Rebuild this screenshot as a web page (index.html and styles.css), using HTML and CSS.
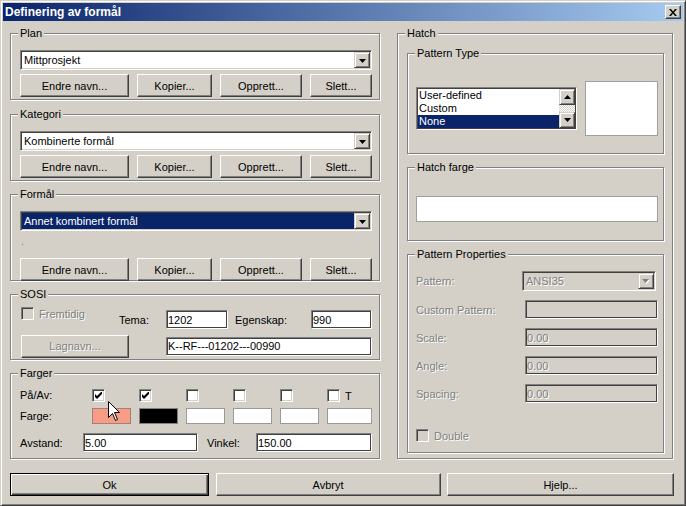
FILE: index.html
```html
<!DOCTYPE html>
<html lang="no">
<head>
<meta charset="utf-8">
<title>Definering av formål</title>
<link rel="stylesheet" href="styles.css">
</head>
<body>
<div class="window">
  <div class="titlebar">
    <span class="title">Definering av formål</span>
    <span class="close"><svg width="8" height="7" viewBox="0 0 8 7"><path d="M0 0H2L4 2.5L6 0H8L5 3.5L8 7H6L4 4.5L2 7H0L3 3.5Z"/></svg></span>
  </div>
  <div class="main">
    <div class="columns">
      <div class="left">
        <div class="group g-std g-plan">
          <span class="legend">Plan</span>
          <div class="combo"><span class="ctext">Mittprosjekt</span><span class="drop"><svg width="7" height="4" viewBox="0 0 7 4"><path d="M0 0H7L3.5 4Z"/></svg></span></div>
          <div class="btnrow">
            <button class="btn b-endre" type="button">Endre navn...</button>
            <button class="btn b-kopier" type="button">Kopier...</button>
            <button class="btn b-opprett" type="button">Opprett...</button>
            <button class="btn b-slett" type="button">Slett...</button>
          </div>
        </div>
        <div class="group g-std g-kat">
          <span class="legend">Kategori</span>
          <div class="combo"><span class="ctext">Kombinerte formål</span><span class="drop"><svg width="7" height="4" viewBox="0 0 7 4"><path d="M0 0H7L3.5 4Z"/></svg></span></div>
          <div class="btnrow">
            <button class="btn b-endre" type="button">Endre navn...</button>
            <button class="btn b-kopier" type="button">Kopier...</button>
            <button class="btn b-opprett" type="button">Opprett...</button>
            <button class="btn b-slett" type="button">Slett...</button>
          </div>
        </div>
        <div class="group g-formal">
          <span class="legend">Formål</span>
          <div class="combo"><span class="ctext sel">Annet kombinert formål</span><span class="drop"><svg width="7" height="4" viewBox="0 0 7 4"><path d="M0 0H7L3.5 4Z"/></svg></span></div>
          <div class="spacer">.</div>
          <div class="btnrow">
            <button class="btn b-endre" type="button">Endre navn...</button>
            <button class="btn b-kopier" type="button">Kopier...</button>
            <button class="btn b-opprett" type="button">Opprett...</button>
            <button class="btn b-slett" type="button">Slett...</button>
          </div>
        </div>
        <div class="group g-sosi">
          <span class="legend">SOSI</span>
          <div class="srow1">
            <div class="fremtidig"><span class="chk dchk"></span><span class="dis">Fremtidig</span></div>
            <span class="l-tema">Tema:</span>
            <span class="edit e-tema">1202</span>
            <span class="l-egenskap">Egenskap:</span>
            <span class="edit e-egenskap">990</span>
          </div>
          <div class="srow2">
            <button class="btn b-lagnavn" type="button"><span class="dis">Lagnavn...</span></button>
            <span class="edit e-lag">K--RF---01202---00990</span>
          </div>
        </div>
        <div class="group g-farger">
          <span class="legend">Farger</span>
          <div class="fgrid">
            <span class="flbl">På/Av:</span>
            <span class="chk"><svg width="7" height="7" viewBox="0 0 7 7"><path d="M0 2L2 4L6 0H7V2L2 7L0 5Z"/></svg></span>
            <span class="chk"><svg width="7" height="7" viewBox="0 0 7 7"><path d="M0 2L2 4L6 0H7V2L2 7L0 5Z"/></svg></span>
            <span class="chk"></span>
            <span class="chk"></span>
            <span class="chk"></span>
            <span class="tcell"><span class="chk"></span><span>T</span></span>
            <span class="flbl">Farge:</span>
            <span class="sw salmon"></span>
            <span class="sw black"></span>
            <span class="sw"></span>
            <span class="sw"></span>
            <span class="sw"></span>
            <span class="sw wide"></span>
          </div>
          <div class="frow3">
            <span class="l-avstand">Avstand:</span>
            <span class="edit e-avstand">5.00</span>
            <span class="l-vinkel">Vinkel:</span>
            <span class="edit e-vinkel">150.00</span>
          </div>
        </div>
      </div>
      <div class="group hatch">
        <span class="legend">Hatch</span>
        <div class="group g-ptype">
          <span class="legend">Pattern Type</span>
          <div class="list">
            <div class="items">
              <div class="item">User-defined</div>
              <div class="item">Custom</div>
              <div class="item sel">None</div>
            </div>
            <div class="vscroll">
              <span class="sbtn"><svg width="7" height="4" viewBox="0 0 7 4"><path d="M3.5 0L7 4H0Z"/></svg></span>
              <span class="track"></span>
              <span class="sbtn"><svg width="7" height="4" viewBox="0 0 7 4"><path d="M0 0H7L3.5 4Z"/></svg></span>
            </div>
          </div>
          <div class="preview"></div>
        </div>
        <div class="group g-hfarge">
          <span class="legend">Hatch farge</span>
          <div class="hbox"></div>
        </div>
        <div class="group g-pprop">
          <span class="legend">Pattern Properties</span>
          <div class="prow prow-first">
            <span class="dis">Pattern:</span>
            <div class="combo dcombo"><span class="ctext dis">ANSI35</span><span class="drop"><svg width="8" height="5" viewBox="0 0 8 5"><path d="M1 1H8L4.5 5Z" fill="#fff"/><path d="M0 0H7L3.5 4Z" fill="#808080"/></svg></span></div>
          </div>
          <div class="prow">
            <span class="dis">Custom Pattern:</span>
            <span class="edit dedit"></span>
          </div>
          <div class="prow">
            <span class="dis">Scale:</span>
            <span class="edit dedit"><span class="dis">0.00</span></span>
          </div>
          <div class="prow">
            <span class="dis">Angle:</span>
            <span class="edit dedit"><span class="dis">0.00</span></span>
          </div>
          <div class="prow">
            <span class="dis">Spacing:</span>
            <span class="edit dedit"><span class="dis">0.00</span></span>
          </div>
          <div class="double"><span class="chk dchk"></span><span class="dis">Double</span></div>
        </div>
      </div>
    </div>
    <div class="actions">
      <button class="btn btn-default b-ok" type="button">Ok</button>
      <button class="btn b-avbryt" type="button">Avbryt</button>
      <button class="btn b-hjelp" type="button">Hjelp...</button>
    </div>
  </div>
  <svg class="cursor" width="12" height="20" viewBox="0 0 12 20"><path d="M0.5 0.5V16.5L4.5 12.5L7.5 19.5L9.5 18.5L6.5 11.5H11.5Z" fill="#fff" stroke="#000" stroke-width="1"/></svg>
</div>
</body>
</html>
```

FILE: styles.css
```css
* { box-sizing: border-box; }
html, body { margin: 0; padding: 0; }
body {
  width: 686px;
  height: 506px;
  overflow: hidden;
  background: #D4D0C8;
  font-family: "Liberation Sans", Arial, sans-serif;
  font-size: 11px;
  color: #000;
}
.window {
  position: relative;
  width: 686px;
  height: 506px;
  display: flex;
  flex-direction: column;
  padding: 2px;
  background: #D4D0C8;
  border: 1px solid;
  border-color: #D4D0C8 #404040 #404040 #D4D0C8;
  box-shadow: inset 1px 1px 0 #fff, inset -1px -1px 0 #808080;
}
.titlebar {
  height: 18px;
  flex: none;
  display: flex;
  align-items: center;
  justify-content: space-between;
  padding: 0 2px 0 2px;
  background: linear-gradient(to right, #0A246A, #A6CAF0);
}
.title {
  color: #fff;
  font-weight: bold;
  font-size: 12px;
  line-height: 18px;
}
.close {
  width: 16px;
  height: 14px;
  display: flex;
  align-items: center;
  justify-content: center;
  background: #D4D0C8;
  border: 1px solid;
  border-color: #fff #404040 #404040 #fff;
  box-shadow: inset -1px -1px 0 #808080;
}
.main {
  flex: 1;
  display: flex;
  flex-direction: column;
  padding: 12px 10px 7px 7px;
}
.columns {
  display: flex;
  align-items: flex-start;
  gap: 17px;
  height: 426px;
  flex: none;
}
.left {
  width: 370px;
  height: 426px;
  display: flex;
  flex-direction: column;
}
.group {
  position: relative;
  flex: none;
  border: 1px solid #808080;
  box-shadow: 1px 1px 0 #fff, inset 1px 1px 0 #fff;
}
.legend {
  position: absolute;
  top: -7px;
  left: 7px;
  padding: 0 2px 0 2px;
  line-height: 13px;
  background: #D4D0C8;
  white-space: nowrap;
}
.g-std { height: 67px; padding: 16px 7px 0 9px; margin-top: 13px; }
.g-plan { margin-top: 0; }
.g-kat { margin-top: 14px; }
.g-formal { height: 87px; padding: 16px 7px 0 9px; margin-top: 13px; }
.g-sosi { height: 66px; padding: 15px 7px 0 10px; margin-top: 13px; }
.g-farger { height: 86px; padding: 15px 7px 0 9px; margin-top: 13px; }

/* controls */
.btn {
  appearance: none;
  -webkit-appearance: none;
  margin: 0;
  padding: 0;
  font: inherit;
  color: #000;
  height: 23px;
  flex: none;
  display: flex;
  align-items: center;
  justify-content: center;
  background: #D4D0C8;
  border: 1px solid;
  border-color: #fff #404040 #404040 #fff;
  box-shadow: inset -1px -1px 0 #808080;
  white-space: nowrap;
}
.btn-default {
  border: 1px solid #000;
  box-shadow: inset 1px 1px 0 #fff, inset -1px -1px 0 #404040, inset -2px -2px 0 #808080;
}
.btnrow {
  display: flex;
  justify-content: space-between;
  height: 23px;
  margin-top: 4px;
}
.b-endre { width: 109px; }
.b-kopier { width: 75px; }
.b-opprett { width: 82px; }
.b-slett { width: 62px; }

.combo {
  height: 20px;
  display: flex;
  padding: 1px;
  background: #fff;
  border: 1px solid;
  border-color: #808080 #fff #fff #808080;
  box-shadow: inset 1px 1px 0 #404040, inset -1px -1px 0 #D4D0C8;
}
.ctext {
  flex: 1;
  padding-left: 2px;
  line-height: 16px;
  white-space: nowrap;
  overflow: hidden;
}
.ctext.sel {
  background: #0A246A;
  color: #fff;
}
.drop {
  width: 16px;
  height: 16px;
  flex: none;
  display: flex;
  align-items: center;
  justify-content: center;
  background: #D4D0C8;
  border: 1px solid;
  border-color: #D4D0C8 #404040 #404040 #D4D0C8;
  box-shadow: inset 1px 1px 0 #fff, inset -1px -1px 0 #808080;
}
.drop svg { margin: 1px 0 0 0; }

.edit {
  height: 19px;
  flex: none;
  display: flex;
  align-items: center;
  padding: 0 1px 0 1px;
  background: #fff;
  white-space: nowrap;
  border: 1px solid;
  border-color: #808080 #fff #fff #808080;
  box-shadow: inset 1px 1px 0 #404040, inset -1px -1px 0 #404040;
}
.dedit { background: #D4D0C8; width: 133px; }

.chk {
  width: 13px;
  height: 13px;
  flex: none;
  display: flex;
  align-items: center;
  justify-content: center;
  background: #fff;
  border: 1px solid;
  border-color: #808080 #fff #fff #808080;
  box-shadow: inset 1px 1px 0 #404040, inset -1px -1px 0 #D4D0C8;
}
.dchk { background: #D4D0C8; }

.dis {
  color: #808080;
  text-shadow: 1px 1px 0 #fff;
}

/* Formål */
.spacer {
  height: 23px;
  padding: 4px 0 0 1px;
  line-height: 13px;
  color: #808080;
}

/* SOSI */
.srow1 {
  display: flex;
  align-items: center;
  height: 19px;
  margin-bottom: 5px;
}
.fremtidig {
  width: 98px;
  height: 13px;
  flex: none;
  display: flex;
  align-items: center;
  gap: 5px;
  align-self: flex-start;
  margin-top: -3px;
}
.l-tema { width: 47px; flex: none; }
.e-tema { width: 62px; }
.l-egenskap { width: 76px; flex: none; margin-left: 7px; }
.e-egenskap { width: 61px; }
.srow2 {
  display: flex;
  align-items: center;
  height: 24px;
}
.b-lagnavn { width: 108px; margin-right: 37px; }
.e-lag { width: 206px; }

/* Farger */
.fgrid {
  display: grid;
  grid-template-columns: 72px repeat(5, 47px) 45px;
  grid-template-rows: 13px 16px;
  row-gap: 6px;
  align-items: center;
}
.flbl { line-height: 13px; }
.tcell {
  display: flex;
  align-items: center;
  gap: 5px;
}
.sw {
  width: 39px;
  height: 16px;
  background: #fff;
  border: 1px solid #9a9a9a;
}
.sw.wide { width: 45px; }
.sw.salmon { background: #F79D86; border-color: #a08078; }
.sw.black { background: #000; border-color: #808080; }
.frow3 {
  display: flex;
  align-items: center;
  height: 19px;
  margin-top: 9px;
}
.l-avstand { width: 63px; flex: none; }
.e-avstand { width: 115px; }
.l-vinkel { width: 49px; flex: none; margin-left: 9px; }
.e-vinkel { width: 116px; }

/* Hatch */
.hatch {
  width: 276px;
  height: 426px;
  padding: 19px 8px 0 9px;
  display: flex;
  flex-direction: column;
  gap: 13px;
}
.g-ptype {
  height: 101px;
  display: flex;
  align-items: flex-start;
  gap: 8px;
  padding: 27px 5px 0 8px;
}
.list {
  width: 161px;
  height: 43px;
  flex: none;
  margin-top: 6px;
  display: flex;
  padding: 1px;
  background: #fff;
  border: 1px solid;
  border-color: #808080 #fff #fff #808080;
  box-shadow: inset 1px 1px 0 #404040, inset -1px -1px 0 #404040;
}
.items { flex: 1; }
.item {
  height: 13px;
  line-height: 13px;
  padding-left: 1px;
  white-space: nowrap;
}
.item.sel { background: #0A246A; color: #fff; }
.vscroll {
  width: 16px;
  display: flex;
  flex-direction: column;
}
.sbtn {
  width: 16px;
  height: 16px;
  flex: none;
  display: flex;
  align-items: center;
  justify-content: center;
  background: #D4D0C8;
  border: 1px solid;
  border-color: #D4D0C8 #404040 #404040 #D4D0C8;
  box-shadow: inset 1px 1px 0 #fff, inset -1px -1px 0 #808080;
}
.track {
  flex: 1;
  background: repeating-conic-gradient(#fff 0 25%, #D4D0C8 0 50%) 0 0 / 2px 2px;
}
.preview {
  width: 73px;
  height: 55px;
  flex: none;
  background: #fff;
  border: 1px solid #a0a0a0;
}
.g-hfarge {
  height: 74px;
  padding: 28px 5px 0 8px;
}
.hbox {
  height: 26px;
  background: #fff;
  border: 1px solid #a0a0a0;
}
.g-pprop {
  height: 199px;
  padding: 16px 5px 0 8px;
}
.prow {
  display: flex;
  align-items: center;
  justify-content: space-between;
  height: 19px;
  margin-top: 9px;
}
.prow-first { height: 20px; margin-top: 0; }
.dcombo {
  width: 134px;
  margin-right: 2px;
  background: #D4D0C8;
}
.double {
  display: flex;
  align-items: center;
  gap: 5px;
  height: 13px;
  margin-top: 26px;
}

/* dialog buttons */
.actions {
  display: flex;
  justify-content: space-between;
  height: 23px;
  flex: none;
  margin-top: 14px;
  margin-right: -1px;
}
.b-ok { width: 199px; }
.b-avbryt { width: 225px; }
.b-hjelp { width: 227px; }

.cursor {
  position: absolute;
  left: 107px;
  top: 400px;
}
```
